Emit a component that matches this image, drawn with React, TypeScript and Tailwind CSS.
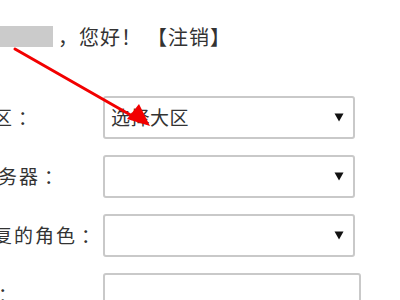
const font = "font-['Noto_Sans_CJK_SC','Noto_Sans',sans-serif]";

const rows = [
  { label: '所在大区', value: '选择大区', select: true, shift: 'pl-0' },
  { label: '所在服务器', value: '', select: true, shift: 'pl-[5px]' },
  { label: '需要恢复的角色', value: '', select: true, shift: 'pl-0' },
  { label: '验证码', value: '', select: false, shift: 'pl-[1px]' },
];

function Field({ value, select }: { value: string; select: boolean }) {
  return (
    <div
      className={`flex h-[43px] items-center justify-between rounded-[3px] border-2 border-[#c9c9c9] bg-white pl-[6px] pr-[9px] ${
        select ? 'w-[252px]' : 'w-[258px]'
      }`}
    >
      <span className="text-[19px] tracking-[0.5px] text-[#333]">{value}</span>
      {select ? (
        <svg width="10" height="9" viewBox="0 0 10 9" aria-hidden>
          <path d="M0.5 0.5 H9.5 L5 8.5 Z" fill="#111" />
        </svg>
      ) : null}
    </div>
  );
}

export default function App() {
  return (
    <div className={`relative h-[300px] w-[400px] overflow-hidden bg-white ${font}`}>
      <div className="flex items-center pt-[26px] text-[20px] leading-[21px] text-[#333]">
        <div className="h-[21px] w-[53px] bg-[#cbcbcb]" />
        <span className="ml-[5px] tracking-[1px]">，您好！</span>
        <span className="ml-[5px] tracking-[1px]">【注销】</span>
      </div>

      <div className="ml-[-70px] mt-[49px] flex flex-col gap-[16px]">
        {rows.map((r) => (
          <div key={r.label} className="flex items-center">
            <span className={`w-[173px] shrink-0 text-[19px] tracking-[2px] text-[#333] ${r.shift}`}>
              {r.label}
              <span className="ml-[4px]">：</span>
            </span>
            <Field value={r.value} select={r.select} />
          </div>
        ))}
      </div>

      <svg className="absolute left-0 top-0" width="400" height="300" aria-hidden>
        <line x1="15" y1="49" x2="134" y2="117" stroke="#f20000" strokeWidth="3" strokeLinecap="round" />
        <path d="M150 126 L127 119 L139 104 Z" fill="#f20000" />
      </svg>
    </div>
  );
}
